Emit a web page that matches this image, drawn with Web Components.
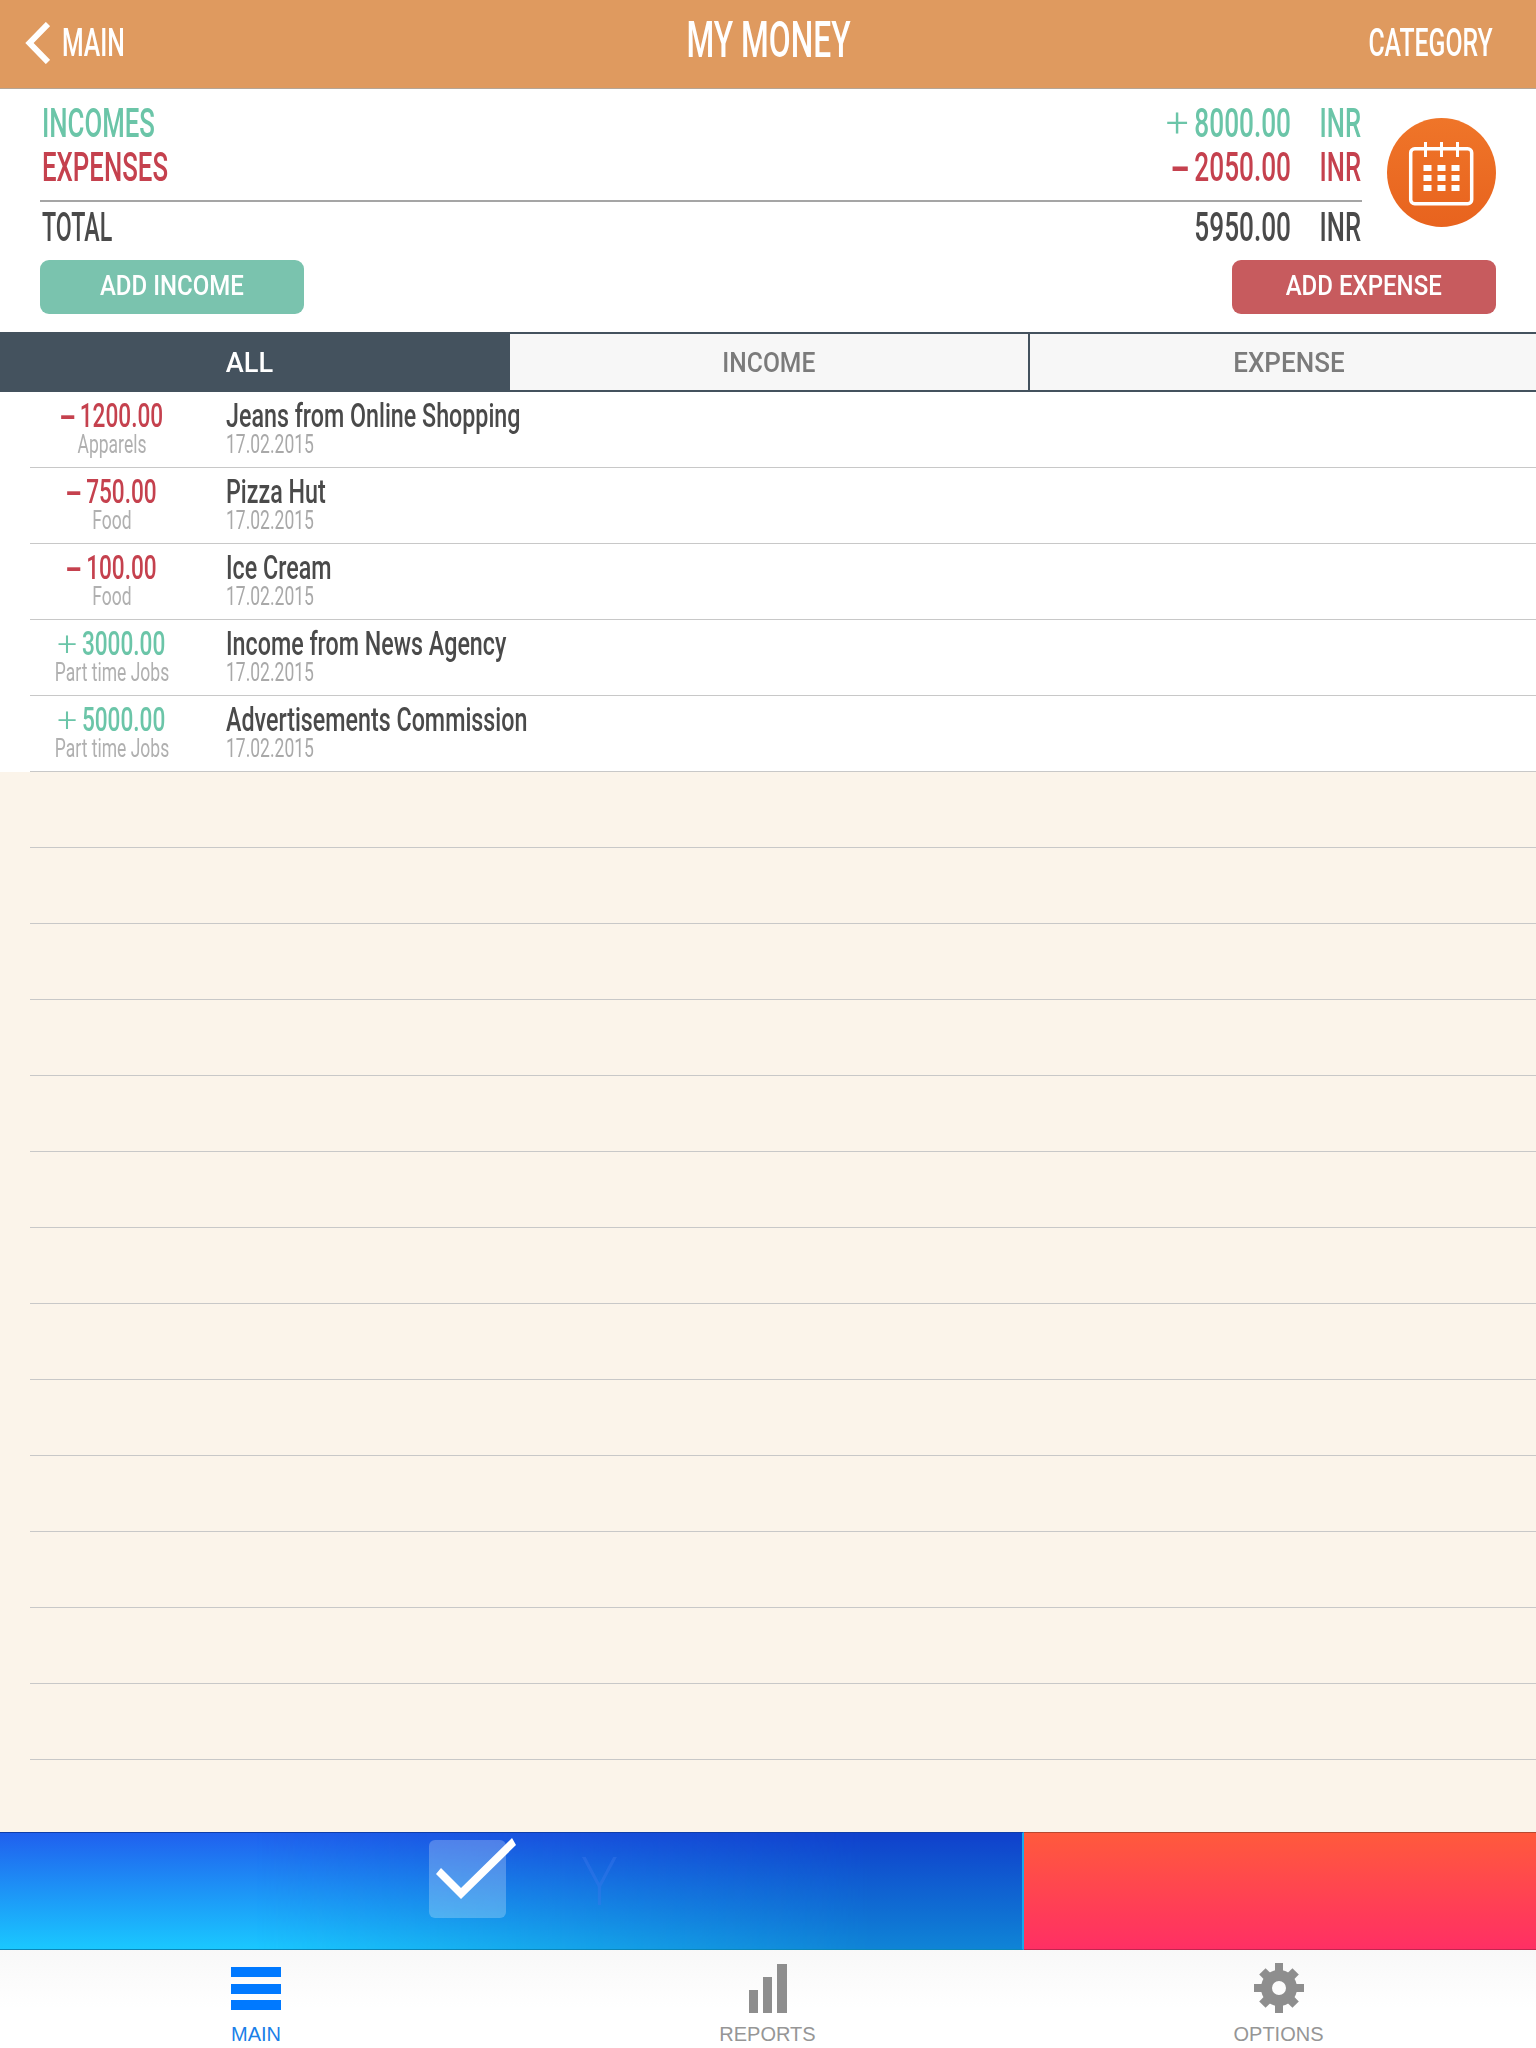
<!DOCTYPE html>
<html>
<head>
<meta charset="utf-8">
<title>My Money</title>
<style>
html, body { margin: 0; padding: 0; background: #fff; }
</style>
</head>
<body>
<money-app></money-app>
<script>
function mkTmplt(innerHtml) {
    var tmplt = document.createElement("template");
    tmplt.innerHTML = innerHtml;
    return tmplt;
}
class Base extends HTMLElement {
    constructor() {
        super();
        this.attachShadow({ mode: "open" }).append(this.constructor.tmplt.content.cloneNode(true));
    }
}

// condensed DIN look: no such font here, so squeeze Roboto
class DinText extends Base {}
DinText.tmplt = mkTmplt(`
    <style>
        :host {
            display: inline-block;
            font: var(--w, 500) var(--s, 40px)/1 Roboto, sans-serif;
            transform: scaleX(var(--x, .64));
            transform-origin: var(--o, left) center;
            white-space: nowrap;
        }
    </style><slot></slot>`);
customElements.define("din-text", DinText);

// the + and - in front of amounts are wider than the squeezed digits
class SignMark extends Base {}
SignMark.tmplt = mkTmplt(`
    <style>
        :host {
            display: inline-block;
            font-weight: 300;
            transform: scaleX(1.55);
            margin: 0 .36em 0 .1em;
        }
        :host([minus]) {
            font-weight: 700;
            transform: scaleX(2.1);
            margin: 0 .34em 0 .1em;
        }
    </style><slot></slot>`);
customElements.define("sign-mark", SignMark);

class AppHeader extends Base {}
AppHeader.tmplt = mkTmplt(`
    <style>
        :host {
            display: grid;
            grid-template-columns: 1fr auto 1fr;
            align-items: center;
            height: 86px;
            border-bottom: 1px solid #b5a595;
            background: #df9a5f;
            color: #fff;
            padding: 0 43px 2px 43px;
        }
        .back { display: flex; align-items: center; gap: 13px; margin-left: -18px; }
        .right { text-align: right; }
        svg { display: block; }
        din-text { position: relative; }
        .main { --s: 39px; --x: .635; width: 62px; left: -1px; }
        .title { --s: 50px; --x: .635; --o: center; width: 165px; display: flex; justify-content: center; top: -3px; }
        .cat { --s: 39px; --x: .635; --o: right; }
    </style>
    <div class="back">
        <svg width="25" height="42" viewBox="0 0 25 42"><path d="M23 2 L4.500 21 L23 40" fill="none" stroke="#fff" stroke-width="6"/></svg>
        <din-text class="main">MAIN</din-text>
    </div>
    <din-text class="title">MY MONEY</din-text>
    <div class="right"><din-text class="cat">CATEGORY</din-text></div>`);
customElements.define("app-header", AppHeader);

class SumRow extends Base {}
SumRow.tmplt = mkTmplt(`
    <style>
        :host {
            display: flex;
            justify-content: space-between;
            height: 44px;
            align-items: center;
            padding: 0 1px 0 2px;
        }
        din-text { --s: 40px; }
        .lbl { --x: var(--lx, .645); }
        .r { display: flex; align-items: center; }
        .amt { --o: right; --x: .655; width: 260px; text-align: right; }
        .cur { --o: right; width: 40px; margin-left: 30px; display: flex; justify-content: flex-end; --x: .64; }
    </style>
    <din-text class="lbl"><slot name="label"></slot></din-text>
    <div class="r">
        <din-text class="amt"><slot name="amount"></slot></din-text>
        <din-text class="cur">INR</din-text>
    </div>`);
customElements.define("sum-row", SumRow);

class ActionBtn extends Base {}
ActionBtn.tmplt = mkTmplt(`
    <style>
        :host {
            display: flex;
            justify-content: center;
            align-items: center;
            width: 264px;
            height: 54px;
            border-radius: 9px;
            background: var(--bg);
            color: #fff;
            padding-bottom: 2px;
            box-sizing: border-box;
        }
        din-text { --s: 27px; --x: .89; --o: center; }
    </style><din-text><slot></slot></din-text>`);
customElements.define("action-btn", ActionBtn);

class SummaryPanel extends Base {}
SummaryPanel.tmplt = mkTmplt(`
    <style>
        :host { display: block; background: #fff; height: 243px; padding: 0 40px; box-sizing: border-box; }
        .top { display: flex; gap: 25px; height: 171px; }
        .nums { width: 1322px; padding-top: 13px; flex: none; }
        .line { height: 2px; background: #a5a5a5; margin: 10px 0 4px; }
        .inc { color: #6bc5a8; }
        .exp { color: #c5414e; --lx: .645; }
        .tot { color: #4a4a4a; --lx: .58; }
        .orb { width: 109px; height: 109px; border-radius: 50%; flex: none; margin-top: 29px; background: linear-gradient(#ef7529, #e8631e); }
        .orb svg { display: block; }
        .btns { display: flex; justify-content: space-between; }
    </style>
    <div class="top">
        <div class="nums">
            <sum-row class="inc"><span slot="label">INCOMES</span><span slot="amount"><sign-mark>+</sign-mark>8000.00</span></sum-row>
            <sum-row class="exp"><span slot="label">EXPENSES</span><span slot="amount"><sign-mark minus>-</sign-mark>2050.00</span></sum-row>
            <div class="line"></div>
            <sum-row class="tot"><span slot="label">TOTAL</span><span slot="amount">5950.00</span></sum-row>
        </div>
        <div class="orb">
            <svg width="109" height="109" viewBox="0 0 109 109">
                <rect x="23.7" y="30.7" width="61" height="55" rx="4" fill="none" stroke="#fff" stroke-width="3.5"/>
                <path d="M38.500 24v15M54.500 24v15M70.500 24v15" stroke="#fff" stroke-width="3" fill="none"/>
                <path fill="#fff" d="M36.500 47h8v6h-8zM50.500 47h8v6h-8zM64.500 47h8v6h-8zM36.500 57h8v6h-8zM50.500 57h8v6h-8zM64.500 57h8v6h-8zM36.500 67h8v6h-8zM50.500 67h8v6h-8zM64.500 67h8v6h-8z"/>
            </svg>
        </div>
    </div>
    <div class="btns">
        <action-btn style="--bg:#7ac3ae">ADD INCOME</action-btn>
        <action-btn style="--bg:#c75b5e">ADD EXPENSE</action-btn>
    </div>`);
customElements.define("summary-panel", SummaryPanel);

class SegTabs extends Base {}
SegTabs.tmplt = mkTmplt(`
    <style>
        :host {
            display: grid;
            grid-template-columns: 510px 518px 1fr;
            height: 60px;
            background: #44525e;
            padding: 2px 0;
            box-sizing: border-box;
        }
        div { display: flex; align-items: center; justify-content: center; background: #f7f7f7; color: #7b7b7b; padding-top: 2px; }
        .on { background: #44525e; color: #fff; padding-right: 12px; }
        .last { margin-left: 2px; padding-left: 12px; }
        din-text { --s: 28px; --x: .93; --o: center; }
        .on din-text { --x: .97; }
        .mid { --x: .88; }
    </style>
    <div class="on"><din-text>ALL</din-text></div>
    <div><din-text class="mid">INCOME</din-text></div>
    <div class="last"><din-text>EXPENSE</din-text></div>`);
customElements.define("seg-tabs", SegTabs);

class TxRow extends Base {
    connectedCallback() {
        const kind = this.getAttribute("kind");
        if (kind) this.shadowRoot.querySelector(".amt").classList.add(kind);
    }
}
TxRow.tmplt = mkTmplt(`
    <style>
        :host { display: block; height: 76px; padding-left: 30px; box-sizing: border-box; }
        .in {
            display: flex;
            height: 76px;
            box-sizing: border-box;
            border-bottom: 1px solid #c8c8c8;
        }
        .c1 { width: 164px; flex: none; text-align: center; }
        .c2 { margin-left: 32px; }
        .amt { --s: 34px; --x: .665; --o: center; display: block; margin-top: 7px; height: 33px; line-height: 33px; }
        .minus { color: #c5414e; }
        .plus { color: #6bc5a8; }
        .sub { --s: 25px; --w: 400; --x: .7; --o: center; display: block; height: 26px; line-height: 26px; color: #b0b0b0; }
        .name { --s: 33px; --x: .705; display: block; margin-top: 7px; height: 33px; line-height: 33px; color: #4a4a4a; }
        .date { --s: 25px; --w: 400; --x: .7; display: block; height: 26px; line-height: 26px; color: #a9a9a9; }
    </style>
    <div class="in">
        <div class="c1">
            <din-text class="amt"><slot name="amount"></slot></din-text>
            <din-text class="sub"><slot name="cat"></slot></din-text>
        </div>
        <div class="c2">
            <din-text class="name"><slot name="title"></slot></din-text>
            <din-text class="date"><slot name="date"></slot></din-text>
        </div>
    </div>`);
customElements.define("tx-row", TxRow);

class AdBanner extends Base {}
AdBanner.tmplt = mkTmplt(`
    <style>
        :host { display: flex; height: 118px; }
        .blue {
            width: 1024px;
            flex: none;
            position: relative;
            box-sizing: border-box;
            padding: 7px 0 0 429px;
            display: flex;
            border-top: 1px solid #0f3ea8;
            border-bottom: 1px solid #0b86b8;
            border-right: 2px solid #18a8ea;
            background: linear-gradient(#2060ee, #1ac8ff);
        }
        /* right half of the blue fades to a darker pair of colours */
        .blue::before {
            content: "";
            position: absolute;
            inset: 0;
            background: linear-gradient(#1040cc, #0f84d6);
            -webkit-mask-image: linear-gradient(90deg, transparent 25%, #000 85%);
            mask-image: linear-gradient(90deg, transparent 25%, #000 85%);
        }
        .red {
            flex: 1;
            border-top: 1px solid #b8482f;
            border-bottom: 1px solid #c0264f;
            background: linear-gradient(#ff5a3c, #ff2f64);
        }
        .box { width: 77px; height: 78px; border-radius: 6px; background: rgba(255,255,255,.24); position: relative; flex: none; }
        .box svg { position: absolute; left: 0; top: 0; overflow: visible; }
        .y { position: relative; margin: 6px 0 0 76px; font: 300 66px/1 "Open Sans", sans-serif; color: rgba(60,120,235,.4); }
    </style>
    <div class="blue">
        <div class="box">
            <svg width="77" height="78" viewBox="0 0 77 78"><polygon fill="#fff" points="83,-2 87,5 32,59 7,34 12,28 32,48"/></svg>
        </div>
        <div class="y">Y</div>
    </div>
    <div class="red"></div>`);
customElements.define("ad-banner", AdBanner);

class TabItem extends Base {}
TabItem.tmplt = mkTmplt(`
    <style>
        :host {
            display: flex;
            flex-direction: column;
            align-items: center;
            color: var(--c, #969696);
            font: 300 20px/24px "Liberation Sans", sans-serif;
            width: 120px;
        }
        .ico { height: 52px; margin-top: 12px; display: block; }
        .lbl { margin-top: 8px; }
    </style>
    <div class="ico"><slot name="icon"></slot></div>
    <div class="lbl"><slot></slot></div>`);
customElements.define("tab-item", TabItem);

class TabBar extends Base {}
TabBar.tmplt = mkTmplt(`
    <style>
        :host {
            display: grid;
            grid-template-columns: 512px 511px 511px;
            justify-items: center;
            height: 98px;
            overflow: hidden;
            background: linear-gradient(#f8f8f8, #fff 60%);
        }
        svg { display: block; }
    </style>
    <tab-item style="--c:#1a7fe8">
        <svg slot="icon" width="50" height="52" viewBox="0 0 50 52"><path fill="#0079ff" d="M0 5h50v10H0zM0 22h50v10H0zM0 38h50v10H0z"/></svg>
        MAIN
    </tab-item>
    <tab-item>
        <svg slot="icon" width="40" height="52" viewBox="0 0 40 52"><path fill="#8e8e8e" d="M1 28h9v23H1zM15 15h9v36h-9zM29 2h10v49H29z"/></svg>
        REPORTS
    </tab-item>
    <tab-item>
        <svg slot="icon" width="50" height="52" viewBox="0 0 50 52">
            <g fill="#8e8e8e" transform="translate(25 26)">
                <circle r="12.500" fill="none" stroke="#8e8e8e" stroke-width="11"/>
                <rect x="-4" y="-25" width="8" height="9"/><rect x="-4" y="16" width="8" height="9"/>
                <rect x="-25" y="-4" width="9" height="8"/><rect x="16" y="-4" width="9" height="8"/>
                <rect x="-4.500" y="-23.500" width="9" height="8" transform="rotate(45)"/><rect x="-4.500" y="-23.500" width="9" height="8" transform="rotate(135)"/>
                <rect x="-4.500" y="-23.500" width="9" height="8" transform="rotate(225)"/><rect x="-4.500" y="-23.500" width="9" height="8" transform="rotate(315)"/>
            </g>
        </svg>
        OPTIONS
    </tab-item>`);
customElements.define("tab-bar", TabBar);

class MoneyApp extends Base {}
const txs = [
    ["minus", "<sign-mark minus>-</sign-mark>1200.00", "Apparels", "Jeans from Online Shopping"],
    ["minus", "<sign-mark minus>-</sign-mark>750.00", "Food", "Pizza Hut"],
    ["minus", "<sign-mark minus>-</sign-mark>100.00", "Food", "Ice Cream"],
    ["plus", "<sign-mark>+</sign-mark>3000.00", "Part time Jobs", "Income from News Agency"],
    ["plus", "<sign-mark>+</sign-mark>5000.00", "Part time Jobs", "Advertisements Commission"]
];
const rows = txs.map(t => `<tx-row kind="${t[0]}"><span slot="amount">${t[1]}</span><span slot="cat">${t[2]}</span><span slot="title">${t[3]}</span><span slot="date">17.02.2015</span></tx-row>`).join("");
MoneyApp.tmplt = mkTmplt(`
    <style>
        :host { display: flex; flex-direction: column; width: 1536px; height: 2048px; overflow: hidden; background: #fff; }
        .list { flex: 1; background: linear-gradient(#fff 380px, #fbf4ea 380px); }
    </style>
    <app-header></app-header>
    <summary-panel></summary-panel>
    <seg-tabs></seg-tabs>
    <div class="list">${rows}${"<tx-row></tx-row>".repeat(13)}</div>
    <ad-banner></ad-banner>
    <tab-bar></tab-bar>`);
customElements.define("money-app", MoneyApp);
</script>
</body>
</html>
